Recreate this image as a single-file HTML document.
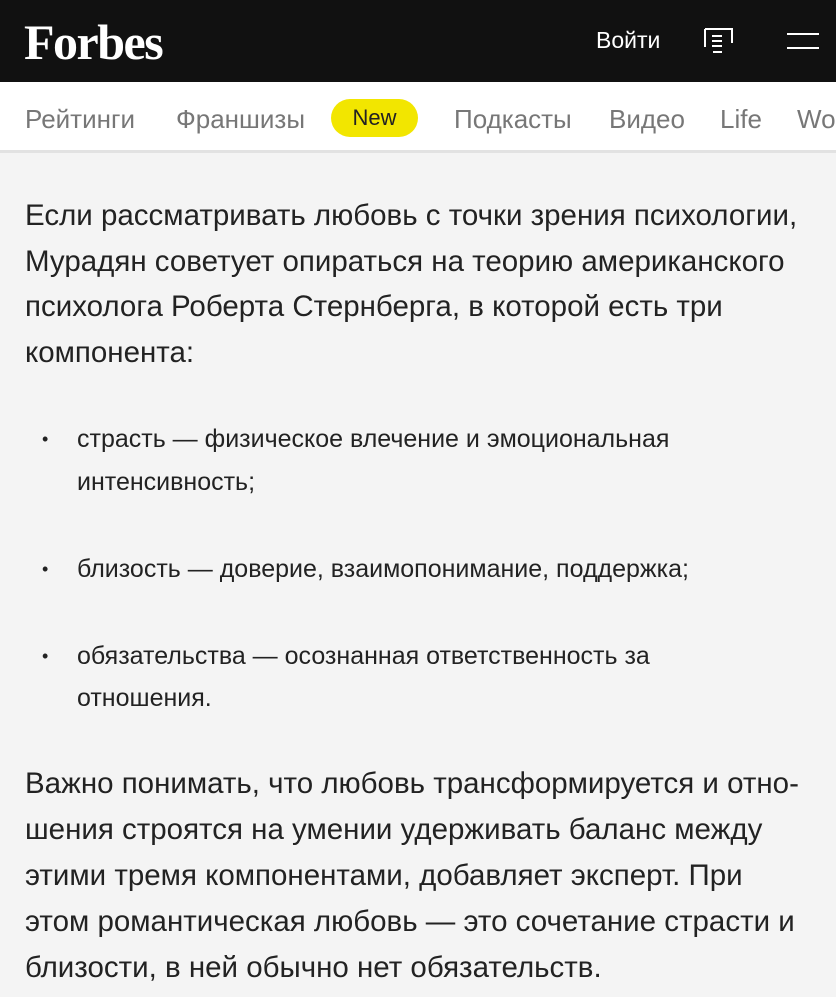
<!DOCTYPE html>
<html><head><meta charset="utf-8"><style>
*{margin:0;padding:0;box-sizing:border-box}
body{width:836px;height:997px;overflow:hidden;background:#f4f4f4;font-family:"Liberation Sans",sans-serif;color:#222}
.top{height:82px;background:#111;position:relative}
.logo{position:absolute;left:24px;top:14px;font-family:"Liberation Serif",serif;font-weight:bold;font-size:50px;line-height:56px;color:#fff;letter-spacing:-1.5px}
.login{position:absolute;left:596px;top:27px;color:#fff;font-size:23px}
.nav{height:71px;background:#fff;border-bottom:3px solid #e2e2e2;position:relative;white-space:nowrap;overflow:hidden}
.nav span{position:absolute;top:22px;font-size:26px;color:#777}
.pill{position:absolute;left:331px;top:17px;width:87px;height:38px;border-radius:19px;background:#f2e600;color:#222;font-size:22px;text-align:center;line-height:38px}
p{font-size:29.5px;line-height:45.5px;padding:0 25px;white-space:nowrap}
ul{list-style:none;padding-left:77px}
li{font-size:25px;line-height:42.5px;position:relative;white-space:nowrap}
li:before{content:"•";position:absolute;left:-35px;font-size:18px}
</style></head><body>
<div class="top">
<div class="logo">Forbes</div>
<div class="login">Войти</div>
<svg style="position:absolute;left:702px;top:28px" width="32" height="26" viewBox="0 0 32 26" fill="none" stroke="#fff" stroke-width="2"><path d="M3 1H30V15M3 1V19M10 8H20M10 13H20M10 18H20M11 24H20"/></svg>
<svg style="position:absolute;left:787px;top:32px" width="32" height="18" viewBox="0 0 32 18" stroke="#fff" stroke-width="2"><path d="M0 2H32M0 16H32"/></svg>
</div>
<div class="nav">
<span style="left:25px">Рейтинги</span>
<span style="left:176px">Франшизы</span>
<div class="pill">New</div>
<span style="left:454px">Подкасты</span>
<span style="left:609px">Видео</span>
<span style="left:720px">Life</span>
<span style="left:797px">Women</span>
</div>
<p style="margin-top:40px">Если рассматривать любовь с точки зрения психологии,<br>Мурадян советует опираться на теорию американского<br>психолога Роберта Стернберга, в которой есть три<br>компонента:</p>
<ul style="margin-top:43px">
<li>страсть — физическое влечение и эмоциональная<br>интенсивность;</li>
<li style="margin-top:45px">близость — доверие, взаимопонимание, поддержка;</li>
<li style="margin-top:44px">обязательства — осознанная ответственность за<br>отношения.</li>
</ul>
<p style="margin-top:41px;line-height:46px">Важно понимать, что любовь трансформируется и отно-<br>шения строятся на умении удерживать баланс между<br>этими тремя компонентами, добавляет эксперт. При<br>этом романтическая любовь — это сочетание страсти и<br>близости, в ней обычно нет обязательств.</p>
</body></html>
